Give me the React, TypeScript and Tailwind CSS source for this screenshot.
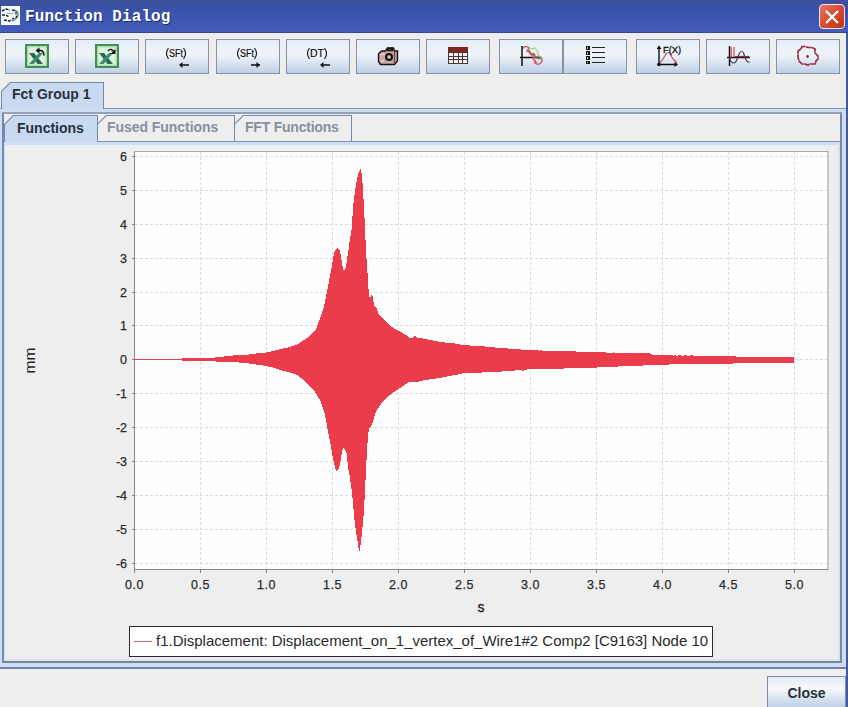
import React, { useState } from 'react';

const UPPER: [number, number][] = [
  [134, 359], [181, 359], [183, 358], [205, 358], [207, 357.5], [215, 357.5], [216, 357], [232, 356], [233, 355.5], [246, 355],
  [256, 353.5], [266, 352.5], [273, 351], [280, 349.3], [290, 347], [297, 344.5], [302, 341.5], [307, 338], [312, 333.5], [316, 329], [319, 321], [322, 313],
  [324.5, 304], [327, 292], [329.5, 278], [332, 265], [334, 253], [336, 249], [337, 248], [338, 249], [340, 251], [341, 256], [342, 263],
  [343, 269], [344, 270.5], [346, 267], [347, 259], [349, 247], [350, 237], [351, 235], [352, 225], [353, 208], [354, 199],
  [356, 185], [358, 174], [359.5, 171], [360.5, 169], [362, 175], [363, 190], [364, 207], [365, 228], [366, 252], [367, 265], [368, 280],
  [369, 297], [371, 297], [372, 294], [373, 298], [374, 306], [377, 309], [379, 315], [384, 320], [390, 326], [398, 330.5], [406, 335], [410, 338],
  [413, 338], [414, 336], [416, 336], [417, 338], [420, 337.5], [421, 338.5], [423, 338], [424, 339.5], [426, 338.5], [428, 339.5], [430, 340], [440, 342],
  [455, 343.5], [460, 344.5], [469, 344.5], [471, 346], [473, 345.5], [484, 346], [486, 347], [500, 347.8], [513, 349], [521, 349], [522, 350.5], [524, 349.5],
  [527, 350], [538, 350], [539, 351], [541, 350], [542, 351], [550, 351], [575, 351], [576, 352], [600, 352], [612, 353], [613, 352], [615, 353], [650, 353.5],
  [652, 354.5], [672, 354.5], [673, 356], [675, 355], [677, 356], [679, 354.5], [682, 356], [685, 355], [688, 356], [691, 355], [694, 356], [696, 355.5],
  [733, 355.5], [736, 356.7], [794, 356.7],
];

const LOWER: [number, number][] = [
  [794, 362.6], [736, 362.8], [733, 363.5], [690, 363.7], [680, 364], [652, 365.3], [620, 366], [616, 367], [578, 368], [550, 369],
  [527, 369.5], [522, 371], [521, 370], [500, 371.7], [480, 372.6], [464, 372.6], [461, 374], [450, 375.8], [440, 378], [425, 380], [417, 382], [408, 382.5],
  [403, 386], [397, 390], [390, 395], [383, 401], [379, 407], [377, 410], [375, 414], [373, 422], [371, 426], [369, 428], [368, 437],
  [367, 450], [366, 470], [365, 491], [364, 510], [363, 522], [362, 532], [361, 543], [360, 548], [359.5, 551], [358.5, 548], [357, 538],
  [355, 525], [354, 515], [352, 492], [350, 478], [348, 467], [346.5, 453], [345, 450], [343, 448], [342, 452], [340, 464], [339, 468],
  [337, 471], [336, 471], [334, 463], [332, 453], [330, 441], [328, 432], [326, 420], [324, 411], [322, 405], [320, 400], [317, 395], [315, 392],
  [310, 387], [305, 381], [297, 375], [290, 372.5], [280, 370], [273, 367.5], [266, 366], [256, 364.5], [246, 363], [232, 362], [216, 361.5], [215, 361],
  [205, 361], [183, 361], [181, 360], [134, 360],
];

const envelope = 'M' + [...UPPER, ...LOWER].map(([x, y]) => `${x} ${y}`).join('L') + 'Z';

const yTicks = [6, 5, 4, 3, 2, 1, 0, -1, -2, -3, -4, -5, -6];
const xTicks = ['0.0', '0.5', '1.0', '1.5', '2.0', '2.5', '3.0', '3.5', '4.0', '4.5', '5.0'];

const yPos = (v: number) => Math.round(359.4 - v * 33.95) + 0.5;
const xPos = (i: number) => Math.round(134 + i * 66) + 0.5;

const ExcelIcon = ({ children }: { children: React.ReactNode }) => (
  <svg width="24" height="24" viewBox="0 0 24 24" fill="none" className="-mt-px">
    <rect x="1" y="1" width="22" height="22" fill="#dff0dc" stroke="#3f8f55" strokeWidth="2" />
    <rect x="2.8" y="2.8" width="18.4" height="18.4" stroke="#9fcf9f" />
    <path d="M4 9h5l9 11h-5.500z" fill="#266a58" />
    <path d="M14 9h4L8.500 20H4z" fill="#3a8b74" />
    {children}
  </svg>
);

const ExcelImportIcon = () => (
  <ExcelIcon>
    <path d="M12 6.500h4q3 1 3 5" stroke="#111" strokeWidth="1.500" />
    <path d="M10.500 6.500l4-3v6z" fill="#111" />
  </ExcelIcon>
);

const ExcelExportIcon = () => (
  <ExcelIcon>
    <path d="M13 7q3-3.500 6 1" stroke="#111" strokeWidth="1.300" />
    <path d="M20.500 5v5h-5z" fill="#111" />
  </ExcelIcon>
);

const BracketIcon = ({ label, x, width, right }: { label: string; x: number; width: number; right?: boolean }) => (
  <svg width="24" height="24" viewBox="0 0 24 24" fill="none" stroke="#111">
    <path d="M3.500 3q-4 5.500 0 11M18.500 3q4 5.500 0 11" strokeWidth="1.100" />
    <text x={x} y="12" textLength={width} lengthAdjust="spacingAndGlyphs" fill="#111" stroke="#111" strokeWidth="0.200" className="font-['Liberation_Sans'] text-[10px]">
      {label}
    </text>
    <path d="M15 20h9" strokeWidth="1.500" />
    {right ? <path d="M24 20l-3.500-3v6z" fill="#111" stroke="none" /> : <path d="M14 20l3.500-3v6z" fill="#111" stroke="none" />}
  </svg>
);

const CameraIcon = () => (
  <svg width="24" height="24" viewBox="0 0 24 24" fill="none" stroke="#1c1212" strokeWidth="1.400" className="-mt-[2px]">
    <path d="M2.500 10l3-3h4l2-3h6l1 3h3v10l-3 3.500h-14l-2-3z" fill="#c6a5a2" />
    <path d="M4.500 10.500h4M5 17h3" stroke="#eed8d5" />
    <path d="M11.500 4.500h5v2h-5z" fill="#705551" />
    <path d="M18.500 8v11" stroke="#6c4a48" />
    <circle cx="13" cy="13" r="3" fill="#9aa2ad" strokeWidth="2" />
    <circle cx="13" cy="13" r="0.800" fill="#fff" stroke="none" />
  </svg>
);

const TableIcon = () => (
  <svg width="24" height="24" viewBox="0 0 24 24" fill="none" shapeRendering="crispEdges" className="-mt-[3px]">
    <path d="M3 4h19v17H3z" fill="#f4f4ef" />
    <path d="M3 4h19v5H3z" fill="#85231f" />
    <path d="M2.500 4v17M7.500 9v12M12.500 9v12M16.500 9v12M21.500 4v17M2 9.500h20M2 13.500h20M2 16.500h20M2 20.500h20" stroke="#463836" />
  </svg>
);

const CurvesIcon = () => (
  <svg width="26" height="24" viewBox="0 0 26 24" fill="none" className="-mt-[2px]">
    <path d="M4 2v20M2 13.500h22" stroke="#111" strokeWidth="1.500" />
    <path d="M10 3l4 2 3-1 3 4 0 3 4 3-1 5" stroke="#96d784" strokeWidth="1.200" />
    <path d="M5.500 4.500q1-3 4-1.500t0 4l3 1 1 3 3-1 1 4 4 0q4 1 2 4t-5 2-1-4" stroke="#d04550" strokeWidth="1.200" />
    <path d="M8 8l3-2 2 4 3-1 1 5 3-2 1 4" stroke="#7b7255" strokeWidth="0.900" />
    <path d="M9 5l3 5 4 2-1 3 4 4" stroke="#ce5360" strokeWidth="1.100" />
  </svg>
);

const ListIcon = () => (
  <svg width="20" height="20" viewBox="0 0 20 20" fill="none" shapeRendering="crispEdges" className="-mt-[3px] ml-[3px]">
    <path d="M0 1h4v4H0zM0 6h4v4H0zM0 11h4v4H0zM0 16h4v3H0z" fill="#111" />
    <path d="M1.500 2v2M1.500 7v2M1.500 12v2M1.500 17v1" stroke="#c8ccd4" />
    <path d="M6 2.500h13M6 7.500h13M6 12.500h13M6 17.500h13" stroke="#222" />
  </svg>
);

const FxIcon = () => (
  <svg width="26" height="26" viewBox="0 0 26 26" fill="none" className="-mt-[2px]">
    <path d="M4 3v20M2 21.500h20" stroke="#111" strokeWidth="1.400" />
    <path d="M4 2.500L1.500 6h5zM23 21.500l-3.500-2.500v5z" fill="#111" />
    <circle cx="4" cy="21.500" r="1.700" fill="#111" />
    <path d="M5 20l3-4 3-5q2.500-3 4 0l3 5 4 4" stroke="#cf4857" strokeWidth="1.200" />
    <g transform="translate(8 10) scale(0.9 1.1)">
      <text textLength="20" lengthAdjust="spacingAndGlyphs" fill="#111" stroke="#111" strokeWidth="0.300" className="font-['Liberation_Sans'] text-[9px]">
        F(X)
      </text>
    </g>
  </svg>
);

const SpectrumIcon = () => (
  <svg width="26" height="24" viewBox="0 0 26 24" fill="none" className="-mt-px">
    <path d="M4.500 2v20M2 13.500h23" stroke="#1b1217" strokeWidth="1.500" />
    <path d="M6.200 13V3M9 13V3" stroke="#d9505c" strokeWidth="1.300" />
    <path d="M10 12.500h14" stroke="#a3283a" strokeWidth="1.200" />
    <path d="M4.500 14q1.500 5 4 5t4-5l2-5q2-3 4 0l2 6q2 4 4 3" stroke="#3d405e" strokeWidth="1.200" />
  </svg>
);

const OrbitIcon = () => (
  <svg width="26" height="24" viewBox="0 0 26 24" fill="none" stroke="#98283c" strokeWidth="1.700" className="-mt-px">
    <path d="M6 5l1-2.500h3l3 1h4l3 1.500v4l3 3v3l-2 2-1 3h-5l-2 1-3-1H7l-3-3-1-4V7z" strokeDasharray="6 .5" />
    <circle cx="12.500" cy="12.500" r="1.400" fill="#98283c" stroke="none" />
  </svg>
);

const ToolButton = ({ title, children }: { title: string; children: React.ReactNode }) => (
  <button
    aria-label={title}
    className="flex h-[35px] w-16 shrink-0 items-center justify-center border-[1.5px] border-[#8593a7] bg-linear-to-b from-[#e4edf7] via-[#f0f4f9] via-45% to-[#bfd0e5]"
  >
    {children}
  </button>
);

interface TabProps {
  label: string;
  active?: boolean;
  className: string;
  textClass: string;
  onClick?: () => void;
}

const Tab = ({ label, active, className, textClass, onClick }: TabProps) => (
  <button
    onClick={onClick}
    className={`shrink-0 bg-[#7389ab] px-px pt-px [clip-path:polygon(9px_0,100%_0,100%_100%,0_100%,0_9px)] ${className}`}
  >
    <span
      className={`flex h-full w-full items-start whitespace-nowrap font-bold [clip-path:polygon(8.6px_0,100%_0,100%_100%,0_100%,0_8.6px)] ${
        active ? 'bg-[#c9daf0] text-[#26303c]' : 'bg-[#eeeeee] text-[#84909d]'
      } ${textClass}`}
    >
      {label}
    </span>
  </button>
);

const Chart = () => (
  <svg width="832" height="481" viewBox="5 145 832 481" className="block font-['Liberation_Sans']">
    <rect x="134" y="152" width="694" height="418" fill="#fefefe" />
    <g stroke="#dcdcdc" strokeDasharray="3 2" fill="none">
      {yTicks.map((v) => (
        <path key={v} d={`M135 ${yPos(v)}H828`} />
      ))}
      {xTicks.map((t, i) => (
        <path key={t} d={`M${xPos(i)} 152V569`} />
      ))}
    </g>
    <path d="M134 151.500H828.500" stroke="#a9aaa2" />
    <path d="M828 152V570" stroke="#b9b9b9" strokeWidth="1.500" />
    <path d="M134.500 152V570M134 569.500H828" stroke="#858585" />
    <g stroke="#858585">
      {yTicks.map((v) => (
        <path key={v} d={`M132 ${yPos(v)}h3`} />
      ))}
      {xTicks.map((t, i) => (
        <path key={t} d={`M${xPos(i)} 569v4`} />
      ))}
    </g>
    <path d={envelope} fill="#eb3c4c" shapeRendering="crispEdges" />
    <g fill="#2b2b2b" stroke="#2b2b2b" strokeWidth="0.250" className="text-[12.5px]">
      {yTicks.map((v) => (
        <text key={v} x="127" y={yPos(v) + 4.5} textAnchor="end">
          {v}
        </text>
      ))}
      {xTicks.map((t, i) => (
        <text key={t} x={xPos(i) - 0.3} y="588.500" textAnchor="middle" textLength="18.500">
          {t}
        </text>
      ))}
    </g>
    <text x="481" y="611.500" textAnchor="middle" fill="#222" stroke="#222" strokeWidth="0.300" className="text-[14px]">
      s
    </text>
    <text transform="translate(35 360.500) rotate(-90)" textAnchor="middle" textLength="26" lengthAdjust="spacingAndGlyphs" fill="#222" className="text-[15px]">
      mm
    </text>
  </svg>
);

const App: React.FC = () => {
  const [tab, setTab] = useState('Functions');

  return (
    <div className="flex h-[707px] w-[848px] flex-col overflow-hidden bg-[#eeeeee] font-['Liberation_Sans',sans-serif]">
      {/* Title bar */}
      <div className="flex h-[33px] shrink-0 items-start border-b border-[#34468f] bg-linear-to-b from-[#3b5199] via-[#3a52ab] via-30% to-[#425cb8] pr-[3px]">
        <svg width="19" height="19" viewBox="0 0 19 19" fill="none" className="mt-[6px] ml-px shrink-0 bg-[#f6f8f6]">
          <path d="M1 5l4-2 4 1M1 9h4l3 2M3 14l5 1 3-1" stroke="#20242a" strokeWidth="1.500" strokeDasharray="3 1" />
          <path d="M12 4q6 1 5 5t-6 6" stroke="#5b8fa5" strokeWidth="1.500" />
          <path d="M11 4l4 1v4l1 2-5 2" stroke="#252c33" strokeWidth="1.300" strokeDasharray="3 1.500" />
          <path d="M6 7l5 1 2-2" stroke="#85afa8" />
        </svg>
        <h1 className="mt-[6px] ml-[5px] flex-1 font-['Liberation_Mono',monospace] text-base leading-[22px] font-bold tracking-[0.1px] text-white [text-shadow:1px_1px_0_#1d2c6b]">
          Function Dialog
        </h1>
        <button aria-label="Close window" className="mt-1 flex h-[25px] w-[26px] items-center justify-center rounded-[4px] border border-[#f4e6ea] bg-linear-to-br from-[#e47a62] via-[#d94b2f] to-[#bf3218]">
          <svg width="14" height="14" viewBox="0 0 14 14" stroke="#fff" strokeWidth="2.400">
            <path d="M1 1l12 12M13 1L1 13" />
          </svg>
        </button>
      </div>

      <div className="flex min-h-0 flex-1 flex-col border-r-2 border-[#4559a0]">
        {/* Toolbar */}
        <div className="flex h-[49px] shrink-0 pt-[6px] pl-[5px]">
          <div className="flex gap-[6.2px]">
            <ToolButton title="Import from Excel"><ExcelImportIcon /></ToolButton>
            <ToolButton title="Export to Excel"><ExcelExportIcon /></ToolButton>
            <ToolButton title="Import SFt"><BracketIcon label="SFt" x={4} width={14} /></ToolButton>
            <ToolButton title="Export SFt"><BracketIcon label="SFt" x={4} width={14} right /></ToolButton>
            <ToolButton title="Import DT"><BracketIcon label="DT" x={4} width={14} /></ToolButton>
            <ToolButton title="Snapshot"><CameraIcon /></ToolButton>
            <ToolButton title="Table"><TableIcon /></ToolButton>
          </div>
          <div className="ml-[8.800px] flex">
            <ToolButton title="Curves"><CurvesIcon /></ToolButton>
            <ToolButton title="Legend"><ListIcon /></ToolButton>
          </div>
          <div className="ml-[9px] flex gap-[6.2px]">
            <ToolButton title="Function"><FxIcon /></ToolButton>
            <ToolButton title="FFT"><SpectrumIcon /></ToolButton>
            <ToolButton title="Orbit"><OrbitIcon /></ToolButton>
          </div>
        </div>

        {/* Group tabs */}
        <div className="flex h-[26px] shrink-0 pl-px">
          <Tab label="Fct Group 1" active className="-mb-px h-[27px] w-[103px]" textClass="pl-[10px] pt-[2px] text-[14px] leading-[18px]" />
        </div>
        <div className="h-[561px] shrink-0 border-t border-b-2 border-t-[#7f94b8] border-b-[#7280aa] bg-[#cfddf1] pt-[3px] pr-1 pb-1 pl-[2px]">
          <div className="flex h-full flex-col border-2 border-t-[#93a2b8] border-r-[#778b9f] border-b-[#748796] border-l-[#7489b0]">
            {/* Function tabs */}
            <div className="flex h-7 shrink-0 items-end border-b border-[#7f91ae] bg-[#eeeeee]">
              <Tab
                label="Functions"
                active={tab === 'Functions'}
                onClick={() => setTab('Functions')}
                className="-mb-px h-[27px] w-[94px]"
                textClass="pl-[12px] pt-[3px] text-[14px] leading-[18px]"
              />
              <Tab
                label="Fused Functions"
                active={tab === 'Fused Functions'}
                onClick={() => setTab('Fused Functions')}
                className="-ml-px h-[26px] w-[138px]"
                textClass="pl-[9px] pt-[2px] text-[14px] leading-[18px] tracking-[-0.05px]"
              />
              <Tab
                label="FFT Functions"
                active={tab === 'FFT Functions'}
                onClick={() => setTab('FFT Functions')}
                className="-ml-px h-[26px] w-[118px]"
                textClass="pl-[10px] pt-[2px] text-[14px] leading-[18px] tracking-[-0.22px]"
              />
            </div>
            <div className="flex-1 border-t-[3px] border-r-2 border-b-2 border-l border-t-[#cfdef3] border-r-[#d5e2f1] border-b-[#dae5f0] border-l-[#d0def1] bg-[#eeeeee]">
              <Chart />
              <div className="ml-[124px] flex h-[31px] w-[584px] items-center border-[1.5px] border-[#2b2b2b] bg-white pl-1">
                <span className="mr-[4px] h-px w-[18px] shrink-0 bg-[#d9606e]" />
                <span className="-mt-[2px] text-[15px] leading-none tracking-[-0.01px] whitespace-nowrap text-[#2a2a2a]">
                  f1.Displacement: Displacement_on_1_vertex_of_Wire1#2 Comp2 [C9163] Node 10
                </span>
              </div>
            </div>
          </div>
        </div>

        {/* Footer */}
        <div className="flex flex-1 justify-end pt-[7px]">
          <button className="h-[34px] w-[79px] shrink-0 border-[1.5px] border-[#7c8da8] bg-linear-to-b from-[#e2ebf6] via-[#f8fafc] via-35% to-[#b9cce3] text-[14px] leading-[29px] font-bold text-[#28303a]">
            Close
          </button>
        </div>
      </div>
    </div>
  );
};

export default App;
